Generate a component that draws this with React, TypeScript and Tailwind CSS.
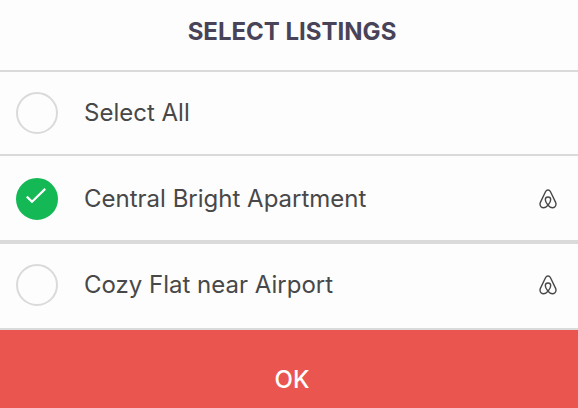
import { useState } from "react";

interface Listing {
  id: string;
  name: string;
}

interface ListingRowProps {
  id: string;
  label: string;
  checked: boolean;
  onChange: () => void;
  showSource?: boolean;
  className?: string;
}

const listings: Listing[] = [
  { id: "central", name: "Central Bright Apartment" },
  { id: "cozy", name: "Cozy Flat near Airport" },
];

function AirbnbIcon() {
  return (
    <svg
      className="w-[18px] h-5 shrink-0 text-[#484848]"
      viewBox="0 0 18 20"
      fill="none"
      stroke="currentColor"
      strokeWidth={1.4}
      strokeLinejoin="round"
      role="img"
      aria-label="Airbnb"
    >
      <path d="M9 16.2C7 13.8 6.3 12.1 6.3 10.7C6.3 9 7.4 8 9 8C10.6 8 11.7 9 11.7 10.7C11.7 12.1 11 13.8 9 16.2C7.4 18 6 18.7 4.6 18.7C2.6 18.7 1 17.1 1 15.1C1 14.4 1.2 13.8 1.5 13.1L6.5 2.8C7.1 1.6 7.8 1 9 1C10.2 1 10.9 1.6 11.5 2.8L16.5 13.1C16.8 13.8 17 14.4 17 15.1C17 17.1 15.4 18.7 13.4 18.7C12 18.7 10.6 18 9 16.2Z" />
    </svg>
  );
}

function ListingRow({
  id,
  label,
  checked,
  onChange,
  showSource = false,
  className = "",
}: ListingRowProps) {
  return (
    <li
      className={`flex items-center pl-4 pr-[21px] border-b-2 border-[#dadada] ${className}`}
    >
      <span className="grid shrink-0">
        <input
          type="checkbox"
          id={id}
          checked={checked}
          onChange={onChange}
          className="col-start-1 row-start-1 appearance-none w-[42px] h-[42px] rounded-full border-2 border-[#dadada] checked:border-[#14b955] checked:bg-[#14b955] cursor-pointer"
        />
        {checked && (
          <svg
            className="col-start-1 row-start-1 w-[42px] h-[42px] text-white pointer-events-none"
            viewBox="0 0 42 42"
            fill="none"
            stroke="currentColor"
            strokeWidth={2.2}
          >
            <path d="M10.8 18.6L16 23.8L29.2 10.9" />
          </svg>
        )}
      </span>
      <label
        htmlFor={id}
        className="flex-1 pl-[26px] text-2xl text-[#484848] cursor-pointer"
      >
        {label}
      </label>
      {showSource && <AirbnbIcon />}
    </li>
  );
}

export default function App() {
  const [selected, setSelected] = useState<string[]>(["central"]);
  const allSelected = selected.length === listings.length;

  const toggle = (id: string) => {
    setSelected((prev) =>
      prev.includes(id) ? prev.filter((item) => item !== id) : [...prev, id]
    );
  };

  const toggleAll = () => {
    setSelected(allSelected ? [] : listings.map((listing) => listing.id));
  };

  return (
    <div className="min-h-screen flex flex-col bg-[#fdfdfd] font-['Inter','Liberation_Sans',sans-serif]">
      {/* Header */}
      <header className="pt-4 pb-[22px] pl-1.5 border-b-2 border-[#dadada]">
        <h1 className="text-2xl font-bold text-center text-[#484358]">
          SELECT LISTINGS
        </h1>
      </header>

      <ul>
        <ListingRow
          id="select-all"
          label="Select All"
          checked={allSelected}
          onChange={toggleAll}
          className="py-5"
        />
        {listings.map((listing, index) => (
          <ListingRow
            key={listing.id}
            id={listing.id}
            label={listing.name}
            checked={selected.includes(listing.id)}
            onChange={() => toggle(listing.id)}
            showSource
            className={
              index > 0 ? "pt-5 pb-[22px] border-t-2" : "pt-[22px] pb-5"
            }
          />
        ))}
      </ul>

      {/* Confirm */}
      <button
        type="button"
        className="grow pt-8 pb-2 pl-1.5 flex items-start justify-center bg-[#ea5550] text-white text-2xl/9 font-medium cursor-pointer"
      >
        OK
      </button>
    </div>
  );
}
